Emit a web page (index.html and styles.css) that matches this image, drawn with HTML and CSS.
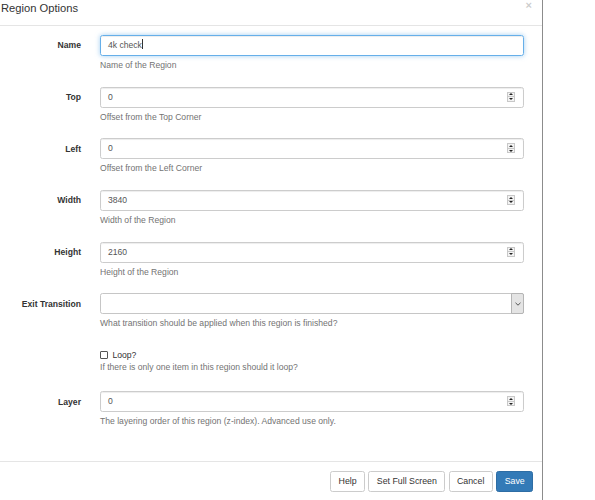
FILE: index.html
```html
<!DOCTYPE html>
<html>
<head>
<meta charset="utf-8">
<link rel="stylesheet" href="styles.css">
</head>
<body>
<div class="modal">
  <div class="modal-header">
    <h4 class="modal-title">Region Options</h4>
    <span class="close">×</span>
  </div>
  <div class="modal-body">
    <div class="form-group">
      <label class="control-label">Name</label>
      <div class="control">
        <div class="input focus">4k check<span class="caret-bar"></span></div>
        <p class="help">Name of the Region</p>
      </div>
    </div>
    <div class="form-group">
      <label class="control-label">Top</label>
      <div class="control">
        <div class="input">0<span class="spin"><span class="up"></span><span class="down"></span></span></div>
        <p class="help">Offset from the Top Corner</p>
      </div>
    </div>
    <div class="form-group">
      <label class="control-label">Left</label>
      <div class="control">
        <div class="input">0<span class="spin"><span class="up"></span><span class="down"></span></span></div>
        <p class="help">Offset from the Left Corner</p>
      </div>
    </div>
    <div class="form-group">
      <label class="control-label">Width</label>
      <div class="control">
        <div class="input">3840<span class="spin"><span class="up"></span><span class="down"></span></span></div>
        <p class="help">Width of the Region</p>
      </div>
    </div>
    <div class="form-group">
      <label class="control-label">Height</label>
      <div class="control">
        <div class="input">2160<span class="spin"><span class="up"></span><span class="down"></span></span></div>
        <p class="help">Height of the Region</p>
      </div>
    </div>
    <div class="form-group">
      <label class="control-label">Exit Transition</label>
      <div class="control">
        <div class="input select"><span class="sel-arrow"><svg width="6" height="4" viewBox="0 0 6 4"><path d="M0.5 0.8 L3 3.2 L5.5 0.8" fill="none" stroke="#555" stroke-width="1"/></svg></span></div>
        <p class="help">What transition should be applied when this region is finished?</p>
      </div>
    </div>
    <div class="form-group loop-group">
      <span class="control-label"></span>
      <div class="control">
        <div class="checkbox"><span class="box"></span>Loop?</div>
        <p class="help loop-help">If there is only one item in this region should it loop?</p>
      </div>
    </div>
    <div class="form-group">
      <label class="control-label">Layer</label>
      <div class="control">
        <div class="input">0<span class="spin"><span class="up"></span><span class="down"></span></span></div>
        <p class="help">The layering order of this region (z-index). Advanced use only.</p>
      </div>
    </div>
  </div>
  <div class="modal-footer">
    <span class="btn">Help</span>
    <span class="btn">Set Full Screen</span>
    <span class="btn">Cancel</span>
    <span class="btn btn-primary">Save</span>
  </div>
</div>
</body>
</html>
```

FILE: styles.css
```css
html, body {
  margin: 0;
  padding: 0;
  background: #fff;
  overflow: hidden;
}
body {
  font-family: "Liberation Sans", Arial, sans-serif;
  font-size: 8.6px;
  color: #333;
}
.modal {
  width: 542px;
  height: 500px;
  border-right: 1px solid #8c8c8c;
  box-sizing: content-box;
  display: flex;
  flex-direction: column;
  background: #fff;
}
.modal-header {
  position: relative;
  height: 25px;
  border-bottom: 1px solid #e5e5e5;
}
.modal-title {
  margin: 0;
  padding: 1px 0 0 1px;
  font-size: 11.2px;
  font-weight: normal;
  line-height: 15px;
  color: #333;
}
.close {
  position: absolute;
  right: 10px;
  top: 0;
  font-size: 11px;
  font-weight: bold;
  color: #000;
  opacity: 0.2;
  line-height: 11px;
}
.modal-body {
  padding: 9px 0 0 0;
  flex: 1;
}
.form-group {
  display: grid;
  grid-template-columns: 81px 424px;
  column-gap: 19px;
  margin-bottom: 9.2px;
}
.control-label {
  text-align: right;
  font-weight: bold;
  padding-top: 4.3px;
  line-height: 12.3px;
  white-space: nowrap;
}
.input {
  position: relative;
  height: 21px;
  box-sizing: border-box;
  border: 1px solid #ccc;
  border-radius: 2.5px;
  padding: 0 7px;
  line-height: 19px;
  color: #555;
  box-shadow: inset 0 1px 1px rgba(0,0,0,.075);
}
.input.focus {
  border-color: #66afe9;
  box-shadow: inset 0 1px 1px rgba(0,0,0,.075), 0 0 5px rgba(102,175,233,.6);
}
.caret-bar {
  display: inline-block;
  width: 1px;
  height: 10px;
  background: #333;
  vertical-align: -1px;
}
.spin {
  position: absolute;
  right: 8px;
  top: 4px;
  width: 8px;
  height: 10px;
  display: flex;
  flex-direction: column;
  border: 1px solid #c8c8c8;
  box-sizing: border-box;
  background: #f3f3f3;
}
.spin .up, .spin .down {
  flex: 1;
  display: flex;
  align-items: center;
  justify-content: center;
}
.spin .up {
  border-bottom: 1px solid #c8c8c8;
}
.spin .up::before {
  content: "";
  border-left: 2px solid transparent;
  border-right: 2px solid transparent;
  border-bottom: 2px solid #222;
}
.spin .down::before {
  content: "";
  border-left: 2px solid transparent;
  border-right: 2px solid transparent;
  border-top: 2px solid #222;
}
.select {
  border-color: #c6c6c6;
  box-shadow: none;
}
.sel-arrow {
  position: absolute;
  right: -1px;
  top: -1px;
  bottom: -1px;
  width: 11px;
  background: #e4e4e4;
  border: 1px solid #b5b5b5;
  border-radius: 0 2px 2px 0;
  display: flex;
  align-items: center;
  justify-content: center;
}
.help {
  margin: 3px 0 6.2px 0;
  line-height: 12.3px;
  color: #737373;
}
.checkbox {
  display: flex;
  align-items: center;
  padding-top: 3.5px;
  line-height: 12.3px;
  color: #333;
}
.checkbox .box {
  width: 6px;
  height: 6px;
  border: 1px solid #555;
  border-radius: 1px;
  margin-right: 4.5px;
}
.loop-help {
  margin-top: 0;
  margin-bottom: 9px;
}
.modal-footer {
  border-top: 1px solid #e5e5e5;
  height: 39px;
  box-sizing: border-box;
  display: flex;
  justify-content: flex-end;
  align-items: flex-start;
  gap: 3.3px;
  padding: 9px 8.7px 0 0;
}
.btn {
  display: inline-block;
  height: 21px;
  box-sizing: border-box;
  padding: 0 7.4px;
  line-height: 19px;
  font-size: 8.8px;
  border: 1px solid #ccc;
  border-radius: 2.5px;
  background: #fff;
  color: #333;
}
.btn-primary {
  background: #337ab7;
  border-color: #2e6da4;
  color: #fff;
  padding: 0 7.6px;
}
```
